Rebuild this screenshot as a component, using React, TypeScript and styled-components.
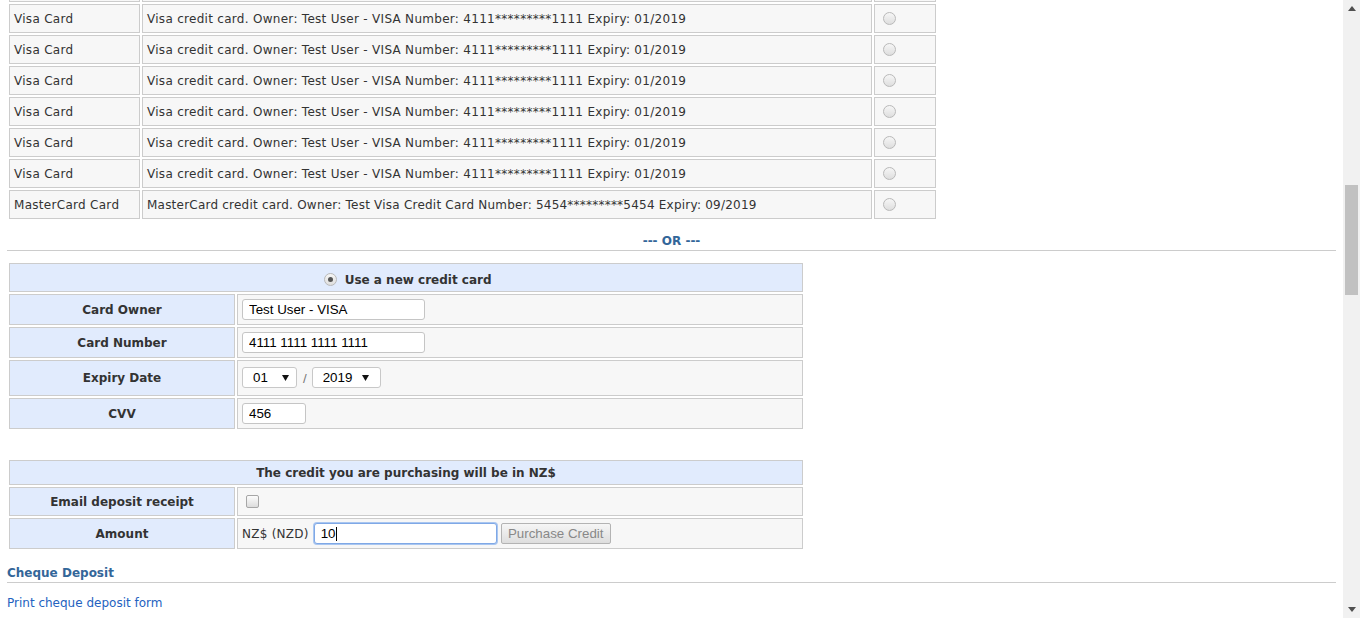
import React from "react";
import styled, { createGlobalStyle } from "styled-components";

const Global = createGlobalStyle`
  html, body { margin: 0; padding: 0; background: #fff; overflow: hidden; }
  body { font-family: "DejaVu Sans", Verdana, sans-serif; font-size: 12px; color: #333; }
  * { box-sizing: border-box; }
`;

const Screen = styled.div`
  display: flex;
  width: 1360px;
  height: 618px;
  overflow: hidden;
`;

const Main = styled.div`
  flex: 1;
  min-width: 0;
  height: 618px;
  overflow: hidden;
  padding: 0 7px;
`;

const Scrollbar = styled.div`
  width: 17px;
  height: 618px;
  background: #f1f1f1;
  display: flex;
  flex-direction: column;
  align-items: center;
`;

const ScrollArrow = styled.div`
  height: 17px;
  width: 17px;
  display: flex;
  align-items: center;
  justify-content: center;
`;

const ScrollSpace = styled.div<{ $h: number }>`
  height: ${(p) => p.$h}px;
`;

const Thumb = styled.div`
  width: 13px;
  height: 110px;
  background: #c1c1c1;
`;

const Table = styled.table<{ $w: number; $top?: number }>`
  border-collapse: separate;
  border-spacing: 2px;
  table-layout: fixed;
  width: ${(p) => p.$w}px;
  margin-top: ${(p) => p.$top ?? 0}px;
`;

const Row = styled.tr<{ $h: number }>`
  height: ${(p) => p.$h}px;
`;

const Cell = styled.td<{ $spread?: number; $pt?: number }>`
  border: 1px solid #cccccc;
  background: #f7f7f7;
  padding: ${(p) => p.$pt ?? 2}px 4px 0;
  vertical-align: middle;
  white-space: nowrap;
  overflow: hidden;
  line-height: 15px;
  letter-spacing: ${(p) => (p.$spread ? `${p.$spread}px` : "normal")};
`;

const LabelCell = styled(Cell)`
  background: #e1ebfd;
  font-weight: bold;
  text-align: center;
`;

const HeadCell = styled(Cell)`
  background: #e1ebfd;
  font-weight: bold;
  text-align: center;
`;

const Radio = styled.span<{ $checked?: boolean }>`
  display: inline-block;
  width: 13px;
  height: 13px;
  border-radius: 50%;
  border: 1px solid #b9b9b9;
  background: linear-gradient(#f6f6f6, #dedede);
  margin: 0 3px 0 4px;
  vertical-align: middle;
  position: relative;
  top: -1px;
  ${(p) =>
    p.$checked
      ? `&::after{content:"";position:absolute;left:3px;top:3px;width:5px;height:5px;border-radius:50%;background:#555;}`
      : ""}
`;

const CheckBox = styled.span`
  display: inline-block;
  width: 13px;
  height: 13px;
  border-radius: 2px;
  border: 1px solid #a6a6a6;
  background: linear-gradient(#fcfcfc, #dcdcdc);
  margin: 0 0 0 4px;
  vertical-align: middle;
  position: relative;
  top: -1px;
`;

const TextInput = styled.input<{ $w: number; $focus?: boolean }>`
  width: ${(p) => p.$w}px;
  height: 21px;
  border: 1px solid ${(p) => (p.$focus ? "#7fa8e6" : "#c5c5c5")};
  box-shadow: ${(p) => (p.$focus ? "0 0 0 1px #a9c6f0" : "none")};
  border-radius: 3px;
  padding: 0 6px;
  font-family: "Liberation Sans", Arial, sans-serif;
  font-size: 13.33px;
  letter-spacing: normal;
  color: #000;
  background: #fff;
  outline: none;
  vertical-align: middle;
  margin: 0;
  position: relative;
  top: -1px;
`;

const FieldWrap = styled.span`
  position: relative;
  display: inline-block;
  vertical-align: middle;
`;

const Caret = styled.span`
  position: absolute;
  left: 22px;
  top: 3px;
  width: 1px;
  height: 14px;
  background: #000;
`;

const SelectWrap = styled.span`
  position: relative;
  display: inline-block;
  vertical-align: middle;
  top: -2px;
`;

const Select = styled.select<{ $w: number }>`
  appearance: none;
  -webkit-appearance: none;
  width: ${(p) => p.$w}px;
  height: 21px;
  border: 1px solid #c8c8c8;
  border-radius: 3px;
  background: #fff;
  padding: 0 0 0 10px;
  font-family: "Liberation Sans", Arial, sans-serif;
  font-size: 13.33px;
  color: #000;
  margin: 0;
  outline: none;
`;

const SelectArrow = styled.svg<{ $right: number }>`
  position: absolute;
  right: ${(p) => p.$right}px;
  top: 8px;
  pointer-events: none;
`;

const Slash = styled.span`
  font-family: "Liberation Sans", Arial, sans-serif;
  font-size: 13.33px;
  color: #777;
  margin: 0 5px 0 6px;
  vertical-align: middle;
  position: relative;
  top: -1px;
`;

const Button = styled.button`
  height: 21px;
  width: 110px;
  margin: 0 0 0 4px;
  padding: 0;
  border: 1px solid #b3b3b3;
  border-radius: 2px;
  background: linear-gradient(#f6f6f6, #dddddd);
  font-family: "Liberation Sans", Arial, sans-serif;
  font-size: 13.33px;
  color: #888;
  vertical-align: middle;
  position: relative;
  top: -1px;
`;

const Currency = styled.span`
  vertical-align: middle;
  margin-right: 5px;
  letter-spacing: 0.25px;
`;

const OrDivider = styled.div`
  padding: 13px 0 1px;
  line-height: 15px;
  text-align: center;
  font-weight: bold;
  color: #336699;
  border-bottom: 1px solid #cccccc;
`;

const SectionTitle = styled.div`
  margin-top: 15px;
  line-height: 15px;
  padding-bottom: 1px;
  font-weight: bold;
  color: #336699;
  border-bottom: 1px solid #cccccc;
`;

const LinkLine = styled.div`
  margin-top: 13px;
  line-height: 15px;
`;

const Link = styled.a`
  color: #2462c0;
  text-decoration: none;
`;

const visa =
  "Visa credit card. Owner: Test User - VISA Number: 4111*********1111 Expiry: 01/2019";

const saved: [string, string, number][] = [
  ...Array.from({ length: 6 }, () => ["Visa Card", visa, 0.29] as [string, string, number]),
  [
    "MasterCard Card",
    "MasterCard credit card. Owner: Test Visa Credit Card Number: 5454*********5454 Expiry: 09/2019",
    0.22,
  ],
];

const Triangle = ({ right }: { right: number }) => (
  <SelectArrow $right={right} width="7" height="6" viewBox="0 0 7 6">
    <path d="M0 0 L7 0 L3.5 6 Z" fill="#111" />
  </SelectArrow>
);

export default function App() {
  return (
    <>
      <Global />
      <Screen>
        <Main>
          <Table $w={931} $top={-29}>
            <colgroup>
              <col style={{ width: 131 }} />
              <col style={{ width: 730 }} />
              <col style={{ width: 62 }} />
            </colgroup>
            <tbody>
              <Row $h={29}>
                <Cell />
                <Cell />
                <Cell />
              </Row>
              {saved.map(([name, desc, sp], i) => (
                <Row $h={29} key={i}>
                  <Cell $spread={0.29}>{name}</Cell>
                  <Cell $spread={sp}>{desc}</Cell>
                  <Cell>
                    <Radio />
                  </Cell>
                </Row>
              ))}
            </tbody>
          </Table>

          <OrDivider>--- OR ---</OrDivider>

          <Table $w={798} $top={10}>
            <colgroup>
              <col style={{ width: 226 }} />
              <col style={{ width: 566 }} />
            </colgroup>
            <tbody>
              <Row $h={29}>
                <HeadCell colSpan={2} $pt={5}>
                  <Radio $checked />
                  &nbsp;Use a new credit card
                </HeadCell>
              </Row>
              <Row $h={31}>
                <LabelCell>Card Owner</LabelCell>
                <Cell>
                  <TextInput $w={183} defaultValue="Test User - VISA" />
                </Cell>
              </Row>
              <Row $h={31}>
                <LabelCell>Card Number</LabelCell>
                <Cell>
                  <TextInput $w={183} defaultValue="4111 1111 1111 1111" />
                </Cell>
              </Row>
              <Row $h={36}>
                <LabelCell $pt={0}>Expiry Date</LabelCell>
                <Cell>
                  <SelectWrap>
                    <Select $w={55} defaultValue="01">
                      <option value="01">01</option>
                    </Select>
                    <Triangle right={8} />
                  </SelectWrap>
                  <Slash>/</Slash>
                  <SelectWrap>
                    <Select $w={69} defaultValue="2019">
                      <option value="2019">2019</option>
                    </Select>
                    <Triangle right={12} />
                  </SelectWrap>
                </Cell>
              </Row>
              <Row $h={31}>
                <LabelCell>CVV</LabelCell>
                <Cell>
                  <TextInput $w={64} defaultValue="456" />
                </Cell>
              </Row>
            </tbody>
          </Table>

          <Table $w={798} $top={27}>
            <colgroup>
              <col style={{ width: 226 }} />
              <col style={{ width: 566 }} />
            </colgroup>
            <tbody>
              <Row $h={25}>
                <HeadCell colSpan={2}>
                  The credit you are purchasing will be in NZ$
                </HeadCell>
              </Row>
              <Row $h={29}>
                <LabelCell>Email deposit receipt</LabelCell>
                <Cell>
                  <CheckBox />
                </Cell>
              </Row>
              <Row $h={31}>
                <LabelCell>Amount</LabelCell>
                <Cell>
                  <Currency>NZ$ (NZD)</Currency>
                  <FieldWrap>
                    <TextInput $w={183} $focus defaultValue="10" />
                    <Caret />
                  </FieldWrap>
                  <Button disabled>Purchase Credit</Button>
                </Cell>
              </Row>
            </tbody>
          </Table>

          <SectionTitle>Cheque Deposit</SectionTitle>
          <LinkLine>
            <Link href="#">Print cheque deposit form</Link>
          </LinkLine>
        </Main>
        <Scrollbar>
          <ScrollArrow>
            <svg width="8" height="5" viewBox="0 0 8 5">
              <path d="M0 5 L4 0 L8 5 Z" fill="#505050" />
            </svg>
          </ScrollArrow>
          <ScrollSpace $h={168} />
          <Thumb />
          <ScrollSpace $h={306} />
          <ScrollArrow>
            <svg width="8" height="5" viewBox="0 0 8 5">
              <path d="M0 0 L4 5 L8 0 Z" fill="#505050" />
            </svg>
          </ScrollArrow>
        </Scrollbar>
      </Screen>
    </>
  );
}
